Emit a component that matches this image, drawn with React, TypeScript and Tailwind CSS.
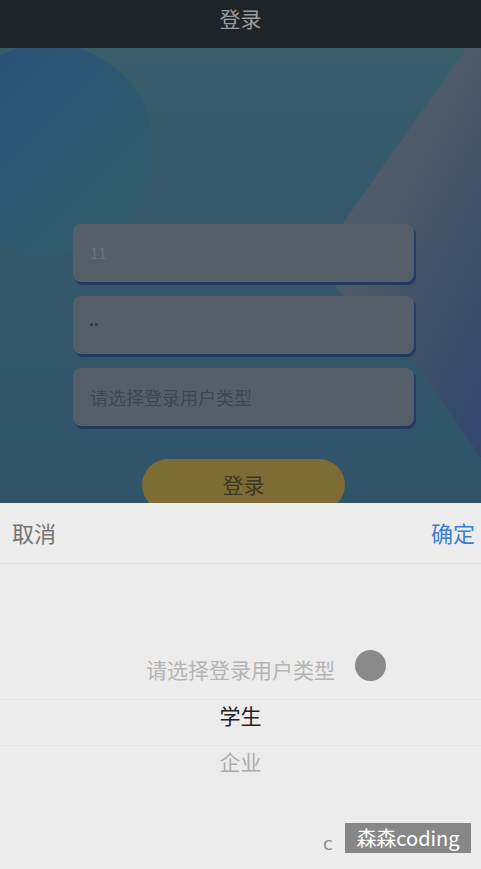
import React from "react";

const font = { fontFamily: '"Noto Sans CJK SC", "Noto Sans", sans-serif' };

function Backdrop() {
  return (
    <svg
      className="absolute inset-0 h-full w-full"
      viewBox="0 0 481 821"
      preserveAspectRatio="none"
      aria-hidden="true"
    >
      <defs>
        <linearGradient id="bg" x1="0" y1="0" x2="0" y2="1">
          <stop offset="0" stopColor="#3a5d6c" />
          <stop offset="0.35" stopColor="#32566a" />
          <stop offset="1" stopColor="#2a4d66" />
        </linearGradient>
        <linearGradient id="circ" x1="0" y1="0" x2="1" y2="1">
          <stop offset="0" stopColor="#28507a" />
          <stop offset="0.55" stopColor="#2f5872" />
          <stop offset="1" stopColor="#355f6c" />
        </linearGradient>
        <linearGradient id="tri" x1="0.1" y1="0" x2="0.8" y2="1">
          <stop offset="0" stopColor="#59636c" />
          <stop offset="0.5" stopColor="#485667" />
          <stop offset="1" stopColor="#33486c" />
        </linearGradient>
      </defs>
      <rect x="0" y="0" width="481" height="821" fill="url(#bg)" />
      <circle cx="48" cy="102" r="106" fill="url(#circ)" />
      <polygon points="467,0 481,0 481,410 420,320 336,240 343,175" fill="url(#tri)" />
    </svg>
  );
}

function Field({ children }: { children: React.ReactNode }) {
  return (
    <div className="flex h-[58px] items-center rounded-[8px] bg-[#555f69] px-[17px] shadow-[2px_3px_0_#213c60]">
      {children}
    </div>
  );
}

export default function App() {
  return (
    <div className="relative h-[869px] w-[481px] overflow-hidden bg-[#2a4d66]" style={font}>
      <div className="flex h-[48px] items-start justify-center bg-[#1f2428] pt-[6px]">
        <span className="text-[21px] leading-[24px] text-[#9b9c9d]">登录</span>
      </div>

      <div className="relative h-[821px]">
        <Backdrop />
        <div className="relative flex flex-col pl-[73px] pr-[67px] pt-[176px]">
          <div className="flex flex-col gap-[14px]">
            <Field>
              <span className="text-[15px] text-[#6b7480]">11</span>
            </Field>
            <Field>
              <span className="flex gap-[2px] pb-[2px]">
                <span className="h-[3px] w-[3px] rounded-full bg-[#2f3a44]" />
                <span className="h-[3px] w-[3px] rounded-full bg-[#2f3a44]" />
              </span>
            </Field>
            <Field>
              <span className="text-[18px] text-[#3c4751]">请选择登录用户类型</span>
            </Field>
          </div>
          <div className="mt-[33px] flex justify-center">
            <div className="flex h-[52px] w-[203px] items-center justify-center rounded-full bg-[#7d6c34]">
              <span className="text-[21px] text-[#3b3722]">登录</span>
            </div>
          </div>
        </div>
      </div>

      <div className="absolute bottom-0 left-0 right-0 flex h-[366px] flex-col bg-[#ececec]">
        <div className="flex h-[61px] items-center justify-between border-b border-[#dedede] pb-[2px] pl-[12px] pr-[6px]">
          <span className="text-[22px] text-[#737373]">取消</span>
          <span className="text-[22px] text-[#3a7fd2]">确定</span>
        </div>
        <div className="relative flex-1">
          <div className="absolute left-0 right-0 top-[135px] border-t border-[#e4e4e4]" />
          <div className="absolute left-0 right-0 top-[181px] border-t border-[#e4e4e4]" />
          <div className="flex flex-col items-center pt-[83px]">
            <div className="flex h-[46px] items-center text-[21px] text-[#b4b4b4]">请选择登录用户类型</div>
            <div className="flex h-[46px] items-center text-[21px] text-[#222222]">学生</div>
            <div className="flex h-[46px] items-center text-[21px] text-[#ababab]">企业</div>
          </div>
          <div className="absolute left-[355px] top-[86px] h-[31px] w-[31px] rounded-full bg-[#8a8a8a]" />
          <div className="absolute bottom-[16px] right-[10px] flex items-end gap-[12px]">
            <span className="text-[18px] leading-none text-[#8a8a8a]" style={{ fontFamily: '"DejaVu Sans", sans-serif' }}>c</span>
            <div className="flex h-[30px] w-[126px] items-center justify-center bg-[#878787]">
              <span className="text-[20px] leading-none text-white" style={{ fontFamily: '"Noto Sans CJK SC", "Open Sans", sans-serif' }}>森森coding</span>
            </div>
          </div>
        </div>
      </div>
    </div>
  );
}
